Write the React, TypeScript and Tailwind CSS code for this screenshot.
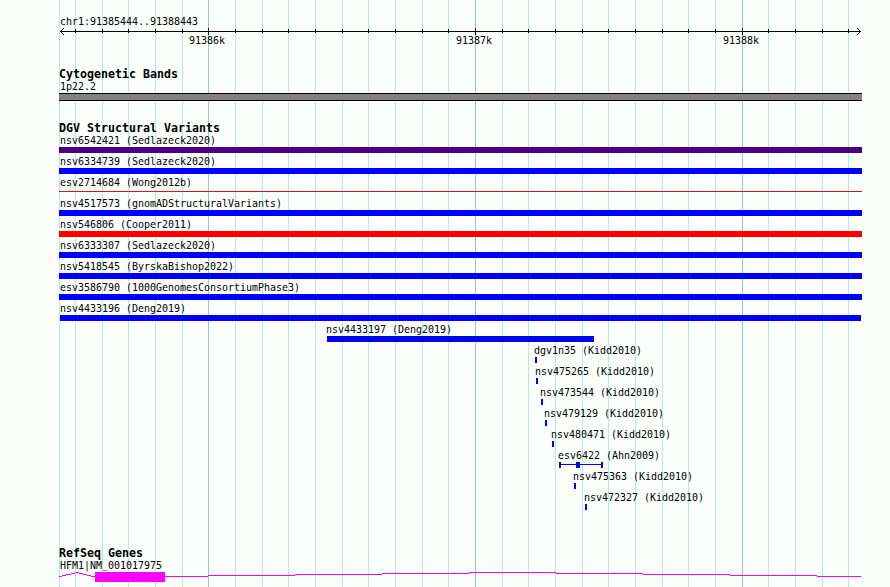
import React from "react";

type Variant = {
  name: string;
  label: string;
  bar: string;
  kind?: "line" | "parts";
};

const full = "ml-[59px] w-[803px] h-[6px]";

const variants: Variant[] = [
  { name: "nsv6542421 (Sedlazeck2020)", label: "pl-[60px]", bar: `${full} bg-[#4b0082]` },
  { name: "nsv6334739 (Sedlazeck2020)", label: "pl-[60px]", bar: `${full} bg-[#0000ff]` },
  { name: "esv2714684 (Wong2012b)", label: "pl-[60px]", bar: "ml-[59px] w-[803px] h-px bg-[#dc1414]", kind: "line" },
  { name: "nsv4517573 (gnomADStructuralVariants)", label: "pl-[60px]", bar: `${full} bg-[#0000ff]` },
  { name: "nsv546806 (Cooper2011)", label: "pl-[60px]", bar: `${full} bg-[#ff0000]` },
  { name: "nsv6333307 (Sedlazeck2020)", label: "pl-[60px]", bar: `${full} bg-[#0000ff]` },
  { name: "nsv5418545 (ByrskaBishop2022)", label: "pl-[60px]", bar: `${full} bg-[#0000ff]` },
  { name: "esv3586790 (1000GenomesConsortiumPhase3)", label: "pl-[60px]", bar: `${full} bg-[#0000ff]` },
  { name: "nsv4433196 (Deng2019)", label: "pl-[60px]", bar: "ml-[60px] w-[801px] h-[6px] bg-[#0000ff]" },
  { name: "nsv4433197 (Deng2019)", label: "pl-[326px]", bar: "ml-[327px] w-[267px] h-[6px] bg-[#0000ff]" },
  { name: "dgv1n35 (Kidd2010)", label: "pl-[534px]", bar: "ml-[535px] w-[2px] h-[6px] bg-[#0000ff]" },
  { name: "nsv475265 (Kidd2010)", label: "pl-[535px]", bar: "ml-[536px] w-[2px] h-[6px] bg-[#0000ff]" },
  { name: "nsv473544 (Kidd2010)", label: "pl-[540px]", bar: "ml-[541px] w-[2px] h-[6px] bg-[#0000ff]" },
  { name: "nsv479129 (Kidd2010)", label: "pl-[544px]", bar: "ml-[545px] w-[2px] h-[6px] bg-[#0000ff]" },
  { name: "nsv480471 (Kidd2010)", label: "pl-[551px]", bar: "ml-[552px] w-[2px] h-[6px] bg-[#0000ff]" },
  { name: "esv6422 (Ahn2009)", label: "pl-[558px]", bar: "ml-[559px]", kind: "parts" },
  { name: "nsv475363 (Kidd2010)", label: "pl-[573px]", bar: "ml-[574px] w-[2px] h-[6px] bg-[#0000ff]" },
  { name: "nsv472327 (Kidd2010)", label: "pl-[584px]", bar: "ml-[585px] w-[2px] h-[6px] bg-[#0000ff]" },
];

const minor = [
  75, 102, 128, 155, 182, 235, 262, 288, 315, 342, 368, 395, 422, 448, 502, 528, 555, 582, 608, 635, 662, 688, 715,
  768, 795, 822, 848,
];
const major = [208, 475, 742];

function Label({ children, className = "" }: { children: React.ReactNode; className?: string }) {
  return (
    <div className={`h-3 whitespace-pre text-[10px] leading-3 tracking-[-0.02px] ${className}`}>
      <span className="inline-block origin-[0_9px] scale-y-110">{children}</span>
    </div>
  );
}

function Title({ children }: { children: React.ReactNode }) {
  return (
    <h2 className="h-[13px] whitespace-pre pl-[59px] text-[11.63px] font-bold leading-[13px]">{children}</h2>
  );
}

function GridLines() {
  return (
    <svg className="absolute inset-0" width="890" height="587" shapeRendering="crispEdges" aria-hidden="true">
      {[59, ...minor].map((x) => (
        <rect key={x} x={x} y="0" width="1" height="587" fill="#afeeee" />
      ))}
      {major.map((x) => (
        <rect key={x} x={x} y="0" width="1" height="587" fill="#87ceeb" />
      ))}
    </svg>
  );
}

function Ruler() {
  return (
    <svg className="block" width="890" height="7" shapeRendering="crispEdges" aria-hidden="true">
      <rect x="60" y="3" width="801" height="1" />
      {minor.map((x) => (
        <rect key={x} x={x} y="1" width="1" height="4" />
      ))}
      {major.map((x) => (
        <rect key={x} x={x} y="0" width="1" height="7" />
      ))}
      {[1, 2, 3].map((d) => (
        <g key={d}>
          <rect x={60 + d} y={3 - d} width="1" height="1" />
          <rect x={60 + d} y={3 + d} width="1" height="1" />
          <rect x={860 - d} y={3 - d} width="1" height="1" />
          <rect x={860 - d} y={3 + d} width="1" height="1" />
        </g>
      ))}
    </svg>
  );
}

function Glyph({ kind, bar }: { kind?: "line" | "parts"; bar: string }) {
  if (kind === "parts") {
    return (
      <div className={`flex h-[6px] w-11 ${bar}`}>
        <div className="w-[2px] bg-[#0000ff]" />
        <div className="mt-[2px] h-px w-[15px] bg-[#0000ff]" />
        <div className="w-1 bg-[#0000ff]" />
        <div className="mt-[2px] h-px w-[21px] bg-[#0000ff]" />
        <div className="w-[2px] bg-[#0000ff]" />
      </div>
    );
  }
  if (kind === "line") {
    return (
      <div className="pt-[2px]">
        <div className={bar} />
      </div>
    );
  }
  return <div className={bar} />;
}

// Intron steps as [x, width, y].
const introns = [
  [59, 3, 4], [62, 4, 3], [66, 5, 2], [71, 4, 1], [75, 4, 0], [79, 4, 1], [83, 4, 2], [87, 4, 3], [91, 4, 4],
  [165, 43, 4], [208, 87, 3], [295, 87, 2], [382, 87, 1], [469, 87, 0], [556, 87, 1], [643, 87, 2],
  [730, 87, 3], [817, 44, 4],
];

export default function App() {
  return (
    <main className="relative h-[587px] w-[890px] overflow-hidden bg-[#fcfefc] font-['DejaVu_Sans_Mono',monospace] text-black">
      <GridLines />
      <div className="relative flex flex-col">
        <section className="h-[67px] pt-4">
          <Label className="pl-[60px]">chr1:91385444..91388443</Label>
          <Ruler />
          <div className="flex gap-[231px] pl-[189px]">
            <Label className="w-9">91386k</Label>
            <Label className="w-9">91387k</Label>
            <Label className="w-9">91388k</Label>
          </div>
        </section>
        <section className="h-[54px] pt-px">
          <Title>Cytogenetic Bands</Title>
          <Label className="pl-[60px]">1p22.2</Label>
          <div className="ml-[59px] h-2 w-[803px] border-y border-black bg-[#848284]" />
        </section>
        <section className="h-[425px] pt-px">
          <Title>DGV Structural Variants</Title>
          {variants.map((v) => (
            <div key={v.name} className="h-[21px]">
              <Label className={v.label}>{v.name}</Label>
              <Glyph kind={v.kind} bar={v.bar} />
            </div>
          ))}
        </section>
        <section className="pt-px">
          <Title>RefSeq Genes</Title>
          <Label className="pl-[60px]">
            HFM1|NM<span className="relative -top-px text-[9px] tracking-[0.58px]">_</span>001017975
          </Label>
          <svg className="block" width="890" height="11" shapeRendering="crispEdges" fill="#ff00ff" aria-hidden="true">
            {introns.map(([x, w, y]) => (
              <rect key={x} x={x} y={y} width={w} height="1" />
            ))}
            <rect x="95" y="0" width="70" height="10" />
          </svg>
        </section>
      </div>
    </main>
  );
}
